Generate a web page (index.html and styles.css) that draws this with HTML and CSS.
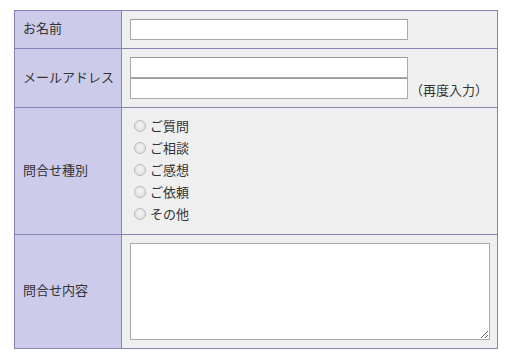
FILE: index.html
```html
<!DOCTYPE html>
<html lang="ja">
<head>
  <meta charset="UTF-8">
  <title>お問合せ</title>
  <link rel="stylesheet" href="styles.css">
</head>
<body>
  <form class="contact">
    <table class="form-table">
      <tr class="row-name">
        <th>お名前</th>
        <td><input type="text" class="field"></td>
      </tr>
      <tr class="row-mail">
        <th>メールアドレス</th>
        <td>
          <div class="line"><input type="email" class="field"></div>
          <div class="line"><input type="email" class="field"><span class="note">（再度入力）</span></div>
        </td>
      </tr>
      <tr class="row-kind">
        <th>問合せ種別</th>
        <td>
          <label class="radio"><input type="radio" name="kind">ご質問</label>
          <label class="radio"><input type="radio" name="kind">ご相談</label>
          <label class="radio"><input type="radio" name="kind">ご感想</label>
          <label class="radio"><input type="radio" name="kind">ご依頼</label>
          <label class="radio"><input type="radio" name="kind">その他</label>
        </td>
      </tr>
      <tr class="row-body">
        <th>問合せ内容</th>
        <td><textarea class="message"></textarea></td>
      </tr>
    </table>
  </form>
</body>
</html>
```

FILE: styles.css
```css
body {
  margin: 0;
  padding: 10px 14px;
  font-family: "Noto Sans CJK JP", "Noto Sans", sans-serif;
  font-size: 13px;
  color: #333;
  background: #fff;
}

.form-table {
  width: 484px;
  border-collapse: collapse;
}

.form-table th,
.form-table td {
  border: 1px solid #8383b5;
  vertical-align: middle;
}

.form-table th {
  width: 92px;
  padding: 0 6px 2px 8px;
  text-align: left;
  font-weight: normal;
  line-height: 1.3;
  white-space: nowrap;
  background-color: #ccccea;
}

.form-table td {
  padding: 8px 8px;
  background-color: #efefef;
}

.row-name td {
  height: 21px;
}

.line {
  display: flex;
  align-items: flex-end;
  height: 21px;
}

.field {
  box-sizing: border-box;
  width: 278px;
  height: 21px;
  margin: 0;
  padding: 1px 3px;
  border: 1px solid #a9a9a9;
  border-top-color: #9a9a9a;
  background: #fff;
  font-size: 13px;
}

.note {
  margin-left: 2px;
  line-height: 18px;
}

.row-kind td {
  padding: 7px 8px 9px;
}

.radio {
  display: flex;
  align-items: center;
  height: 22px;
  line-height: 1.3;
}

.radio input {
  appearance: none;
  -webkit-appearance: none;
  width: 12px;
  height: 12px;
  margin: 0 4px 0 4px;
  border: 1px solid #b9b9b9;
  border-radius: 50%;
  background: radial-gradient(circle at 50% 40%, #f4f4f4 0, #dcdcdc 100%);
}

.row-body td {
  padding: 8px 7px 8px 8px;
}

.message {
  display: block;
  box-sizing: border-box;
  width: 360px;
  height: 97px;
  margin: 0;
  border: 1px solid #a9a9a9;
  background: #fff;
  resize: both;
}
```
